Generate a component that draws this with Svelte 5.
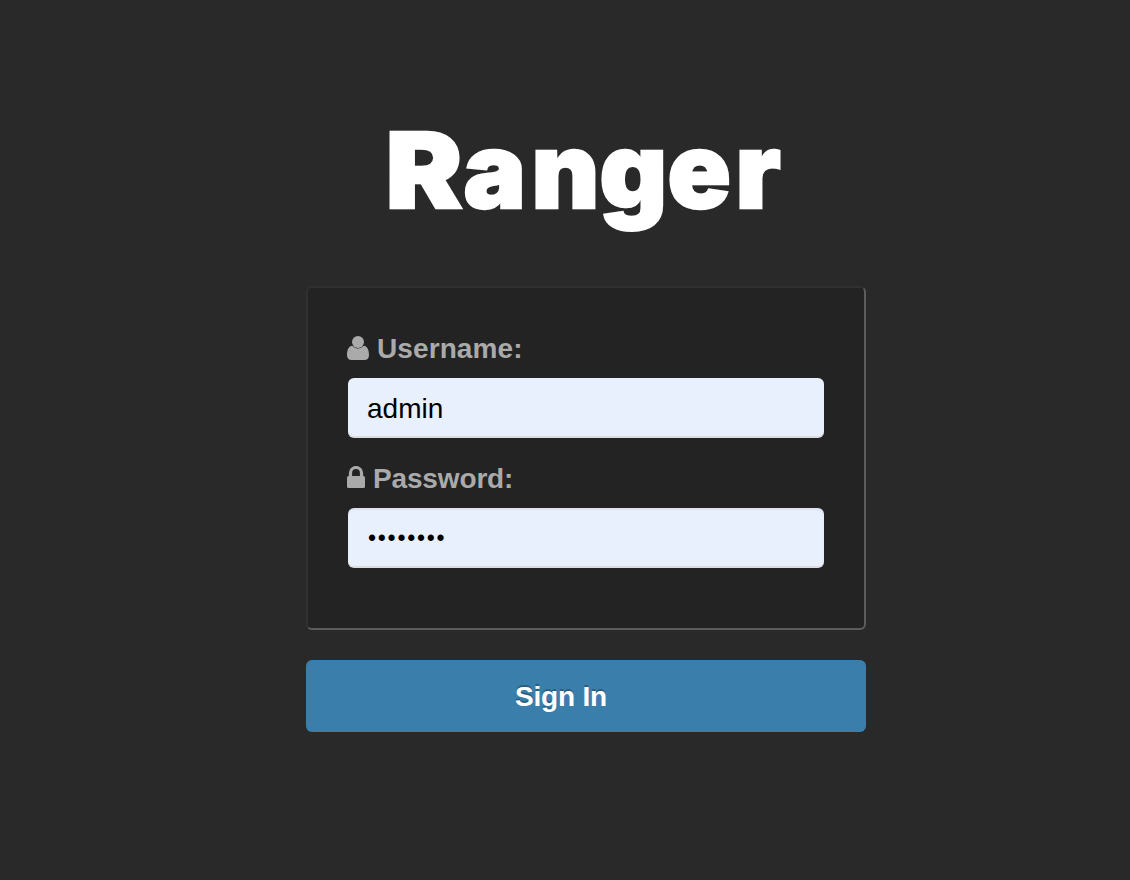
<script lang="ts">
	let username = $state('admin');
	let password = $state('password');

	function signIn(event: SubmitEvent) {
		event.preventDefault();
	}
</script>

<main class="login">
	<svg class="logo" viewBox="0 0 400 120" role="img" aria-label="Ranger">
		<text y="86"><tspan x="-2.5" textLength="77" lengthAdjust="spacingAndGlyphs">R</tspan><tspan x="75.5 143.5 211.5 279.5 347.5">anger</tspan></text>
	</svg>

	<form onsubmit={signIn}>
		<div class="fields">
			<label for="username">
				<svg class="user-icon" viewBox="0 0 22 24" aria-hidden="true">
					<circle cx="11" cy="6" r="6" />
					<path d="M5.2 9.8Q11 15.4 16.8 9.8C20.6 10.2 22 14.5 22 19.2C22 22.2 20.2 24 17.5 24H4.5C1.8 24 0 22.2 0 19.2C0 14.5 1.4 10.2 5.2 9.8Z" />
				</svg>
				<span>Username:</span>
			</label>
			<input id="username" type="text" bind:value={username} autocomplete="username" spellcheck="false" />

			<label class="password-label" for="password">
				<svg class="lock-icon" viewBox="0 0 18 22" aria-hidden="true">
					<path class="shackle" d="M3.5 11V7a5.5 5.5 0 0 1 11 0v4" />
					<rect y="10" width="18" height="12" rx="1.5" />
				</svg>
				<span>Password:</span>
			</label>
			<input id="password" type="password" bind:value={password} autocomplete="current-password" />
		</div>

		<button type="submit">Sign In</button>
	</form>
</main>

<style>
	:global(body) {
		background: #292929;
	}

	.login {
		box-sizing: border-box;
		width: 560px;
		height: 880px;
		margin-left: 306px;
		padding-top: 122px;
		font-family: 'Liberation Sans', Arial, sans-serif;
		font-size: 28px;
	}

	.logo {
		display: block;
		width: 400px;
		height: 120px;
		margin: 0 0 44px 82px;
		overflow: visible;
	}

	.logo text {
		font-family: Inter, 'Liberation Sans', sans-serif;
		font-size: 104.5px;
		font-weight: 900;
		fill: #fff;
		stroke: #fff;
		stroke-width: 2.4px;
	}

	.fields {
		box-sizing: border-box;
		height: 344px;
		padding: 40px;
		border: 2px solid #303030;
		border-right-color: #5c5c5c;
		border-bottom-color: #5c5c5c;
		border-radius: 6px;
		background: #232323;
	}

	label {
		display: flex;
		align-items: center;
		height: 40px;
		margin-bottom: 10px;
		margin-left: -1px;
		color: #aaa;
		font-weight: 700;
		letter-spacing: 0.1px;
	}

	.password-label {
		letter-spacing: -0.15px;
	}

	label span {
		padding-top: 2px;
	}

	label svg {
		flex: none;
		fill: #aaa;
	}

	.user-icon {
		width: 22px;
		height: 24px;
		margin-right: 8px;
	}

	.lock-icon {
		width: 18px;
		height: 22px;
		margin-right: 8px;
		margin-bottom: 2px;
	}

	.shackle {
		fill: none;
		stroke: #aaa;
		stroke-width: 3.2px;
	}

	input {
		display: block;
		box-sizing: border-box;
		width: 476px;
		height: 60px;
		margin: 0 0 20px;
		padding: 3px 19px 0;
		border: 0;
		border-bottom: 2px solid #dcdcde;
		border-radius: 6px;
		outline: 0;
		background: #e8effd;
		color: #000;
		font: inherit;
	}

	input[type='password'] {
		padding-left: 20px;
		box-shadow: inset 0 2px 2px rgba(0, 0, 0, 0.06);
		font-size: 23px;
		letter-spacing: 1.75px;
	}

	button {
		display: block;
		width: 100%;
		height: 72px;
		margin-top: 30px;
		padding: 1px 50px 0 0;
		border: 0;
		border-radius: 6px;
		background: #3a7fab;
		color: #fff;
		font: inherit;
		font-weight: 700;
		letter-spacing: -0.2px;
		text-shadow: 0 -2px 0 rgba(0, 0, 0, 0.25);
	}
</style>
